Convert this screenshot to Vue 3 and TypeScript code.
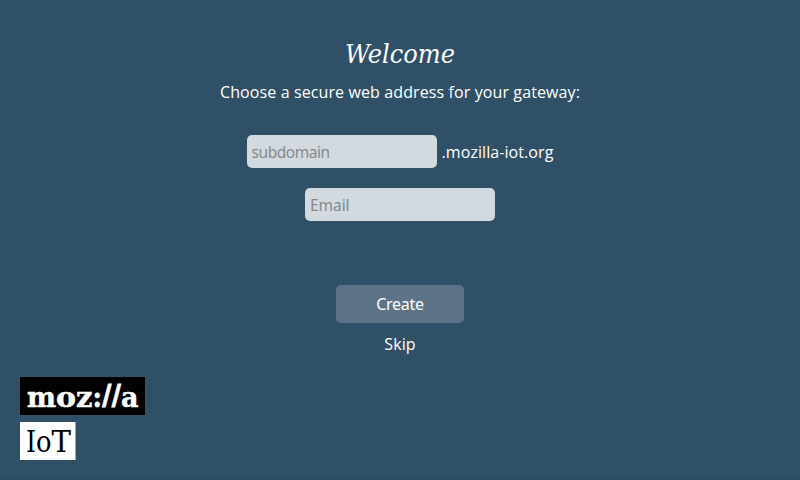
<script setup lang="ts">
import { ref } from 'vue'

const subdomain = ref('')
const email = ref('')
</script>

<template>
  <main class="setup">
    <h1 class="title">
      <svg width="140" height="44" viewBox="0 0 140 44">
        <text x="15" y="29" textLength="110" lengthAdjust="spacingAndGlyphs">Welcome</text>
      </svg>
    </h1>
    <p class="lead">Choose a secure web address for your gateway:</p>
    <form class="form" @submit.prevent>
      <div class="domain">
        <input v-model="subdomain" class="field" type="text" placeholder="subdomain" />
        <span class="suffix">.mozilla-iot.org</span>
      </div>
      <input v-model="email" class="field email" type="text" placeholder="Email" />
      <button class="create" type="submit"><span>Create</span></button>
      <a class="skip"><span>Skip</span></a>
    </form>
    <footer class="brand">
      <svg class="moz" width="125" height="38" viewBox="0 0 125 38">
        <rect width="125" height="38" />
        <text x="7" y="30" textLength="29" lengthAdjust="spacingAndGlyphs">m</text>
        <text x="36" y="30" textLength="20" lengthAdjust="spacingAndGlyphs">o</text>
        <text x="56" y="30" textLength="16.5" lengthAdjust="spacingAndGlyphs">z</text>
        <text x="72.5" y="30" textLength="9.5" lengthAdjust="spacingAndGlyphs">:</text>
        <text class="slash" x="82" y="30" textLength="19" lengthAdjust="spacingAndGlyphs">//</text>
        <text x="101" y="30" textLength="17.5" lengthAdjust="spacingAndGlyphs">a</text>
      </svg>
      <svg class="iot" width="56" height="38" viewBox="0 0 56 38">
        <rect width="55.5" height="38" />
        <text x="6" y="30" textLength="10" lengthAdjust="spacingAndGlyphs">I</text>
        <text x="16" y="30" textLength="15.5" lengthAdjust="spacingAndGlyphs">o</text>
        <text x="31.5" y="30" textLength="19.5" lengthAdjust="spacingAndGlyphs">T</text>
      </svg>
    </footer>
  </main>
</template>

<style>
body {
  background: #305067;
}
</style>

<style scoped>
.setup {
  box-sizing: border-box;
  height: 480px;
  padding-top: 34px;
  display: flex;
  flex-direction: column;
  align-items: center;
  background: #305067;
  border-bottom: 4px solid #2d4d63;
  color: #fff;
  font: 16px/22px "Open Sans", sans-serif;
}
.title {
  margin: 0;
  height: 44px;
}
.title svg {
  display: block;
}
.title text {
  fill: #fff;
  font: italic 400 26px "DejaVu Serif", serif;
}
.lead {
  margin: 3px 0 0;
  letter-spacing: 0.11px;
  white-space: nowrap;
}
.form {
  display: flex;
  flex-direction: column;
  align-items: center;
  margin-top: 32px;
}
.domain {
  display: flex;
  align-items: center;
  gap: 5px;
}
.suffix {
  letter-spacing: 0.07px;
}
.field {
  box-sizing: border-box;
  width: 190px;
  height: 33px;
  padding: 0 5px;
  border: 0;
  border-radius: 5px;
  outline: 0;
  background: #d2d9df;
  color: #333;
  font: 15.5px "Noto Sans", sans-serif;
  letter-spacing: -0.45px;
}
.field::placeholder {
  color: #868a8d;
  opacity: 1;
}
.email {
  margin-top: 20px;
  letter-spacing: -0.05px;
}
.create {
  width: 128px;
  height: 38px;
  margin-top: 64px;
  padding: 0;
  border: 0;
  border-radius: 5px;
  background: #5d7488;
  color: #fff;
  font: 16px "Noto Sans", sans-serif;
  letter-spacing: -0.3px;
}
.skip {
  margin-top: 10px;
  letter-spacing: 0.1px;
}
.brand {
  align-self: flex-start;
  margin: 22px 0 0 20px;
  display: flex;
  flex-direction: column;
  gap: 7px;
}
.brand svg {
  display: block;
}
.moz rect {
  fill: #000;
}
.moz text {
  fill: #fff;
  stroke: #fff;
  stroke-width: 0.5px;
  font: 700 28px "DejaVu Serif", serif;
}
.moz .slash {
  stroke-width: 0.8px;
  font: 700 32px "Open Sans", sans-serif;
}
.iot rect {
  fill: #fff;
}
.iot text {
  fill: #000;
  font: 29px "DejaVu Serif", serif;
}
</style>
